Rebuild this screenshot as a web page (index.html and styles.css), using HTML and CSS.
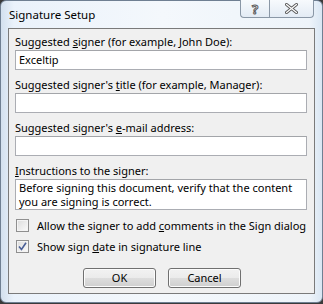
FILE: index.html
```html
<!DOCTYPE html>
<html lang="en">
<head>
    <meta charset="UTF-8">
    <title>Signature Setup</title>
    <link rel="stylesheet" href="styles.css">
</head>
<body>
    <div class="window">
        <div class="titlebar">
            <span class="title">Signature Setup</span>
            <div class="caption-buttons">
                <button class="cap-btn cap-help">?</button>
                <button class="cap-btn cap-close">
                    <svg width="13" height="11" viewBox="0 0 13 11">
                        <path d="M1.5 1.5 L11.5 9.5 M11.5 1.5 L1.5 9.5" stroke="#5a5a5a" stroke-width="3" stroke-linecap="round"/>
                        <path d="M1.5 1.5 L11.5 9.5 M11.5 1.5 L1.5 9.5" stroke="#ffffff" stroke-width="1.2" stroke-linecap="round"/>
                    </svg>
                </button>
            </div>
        </div>

        <div class="client">
            <label class="field-label">Suggested <u>s</u>igner (for example, John Doe):</label>
            <div class="textbox">Exceltip</div>

            <label class="field-label">Suggested signer's <u>t</u>itle (for example, Manager):</label>
            <div class="textbox"></div>

            <label class="field-label">Suggested signer's <u>e</u>-mail address:</label>
            <div class="textbox"></div>

            <label class="field-label"><u>I</u>nstructions to the signer:</label>
            <div class="textbox textarea">Before signing this document, verify that the content<br>you are signing is correct.</div>

            <div class="check-row">
                <span class="checkbox"></span>
                <span>Allow the signer to add <u>c</u>omments in the Sign dialog</span>
            </div>
            <div class="check-row">
                <span class="checkbox checked">
                    <svg width="9" height="9" viewBox="0 0 9 9">
                        <path d="M1 4.5 L3.5 7.5 L8 0.8" fill="none" stroke="#4a5f97" stroke-width="1.6"/>
                    </svg>
                </span>
                <span>Show sign <u>d</u>ate in signature line</span>
            </div>

            <div class="button-row">
                <button class="push-btn">OK</button>
                <button class="push-btn">Cancel</button>
            </div>
        </div>
    </div>
</body>
</html>
```

FILE: styles.css
```css
* {
    margin: 0;
    padding: 0;
    box-sizing: border-box;
    font-family: "Segoe UI", "Noto Sans", sans-serif;
}

body {
    width: 323px;
    height: 304px;
    background: #3a3a3a;
    overflow: hidden;
}

.window {
    width: 323px;
    height: 303px;
    border-radius: 6px;
    border: 1px solid #6f7f92;
    background: linear-gradient(to right, #d3e0ee 0%, #eaf2fb 4%, #f4f8fc 50%, #eef4fa 96%, #d9e6f3 100%);
    padding: 0 7px 8px 7px;
    display: flex;
    flex-direction: column;
}

.titlebar {
    height: 27px;
    display: flex;
    align-items: flex-start;
    justify-content: space-between;
}

.title {
    font-size: 11.5px;
    color: #000;
    margin-top: 6px;
    padding-left: 1px;
}

.caption-buttons {
    display: flex;
    margin-top: -1px;
    margin-right: 1px;
}

.cap-btn {
    height: 18px;
    border: 1px solid #8a97a6;
    border-top: none;
    background: linear-gradient(to bottom, #f7fafd, #e3ebf4);
    display: flex;
    align-items: center;
    justify-content: center;
}

.cap-help {
    width: 29px;
    border-radius: 0 0 0 4px;
    border-right: none;
    font-size: 13px;
    font-weight: bold;
    color: #fff;
    -webkit-text-stroke: 1px #5a5a5a;
}

.cap-close {
    width: 45px;
    border-radius: 0 0 4px 0;
}

.client {
    flex: 1;
    background: #f0f0f0;
    border: 1px solid #7a7a7a;
    padding: 5px 7px 0 6px;
    font-size: 11px;
    color: #000;
}

.field-label {
    display: block;
    line-height: 16px;
    margin-top: 7px;
}

.field-label:first-child {
    margin-top: 0;
}

.textbox {
    height: 20px;
    background: #fff;
    border: 1px solid #abadb3;
    border-top-color: #a3a5a9;
    padding: 1px 0 0 3px;
    line-height: 16px;
}

.textarea {
    height: 31px;
    line-height: 14px;
    padding-top: 1px;
    white-space: nowrap;
    overflow: hidden;
}

.check-row {
    display: flex;
    align-items: center;
    gap: 8px;
    height: 13px;
    margin-top: 9px;
    padding-left: 1px;
    line-height: 14px;
    white-space: nowrap;
}

.check-row + .check-row {
    margin-top: 8px;
}

.checkbox {
    width: 13px;
    height: 13px;
    border: 1px solid #8f8f8f;
    background: linear-gradient(135deg, #dcdcdc, #fbfbfb);
    box-shadow: inset 0 0 0 1px #f4f4f4;
    display: flex;
    align-items: center;
    justify-content: center;
    flex-shrink: 0;
}

.button-row {
    display: flex;
    justify-content: center;
    gap: 12px;
    margin-top: 15px;
    padding-left: 2px;
}

.push-btn {
    width: 73px;
    height: 20px;
    border: 1px solid #707070;
    border-radius: 3px;
    background: linear-gradient(to bottom, #f2f2f2 0%, #ebebeb 50%, #dddddd 51%, #cfcfcf 100%);
    box-shadow: inset 0 0 0 1px #fcfcfc;
    font-size: 11px;
    color: #000;
    line-height: 16px;
}
```
